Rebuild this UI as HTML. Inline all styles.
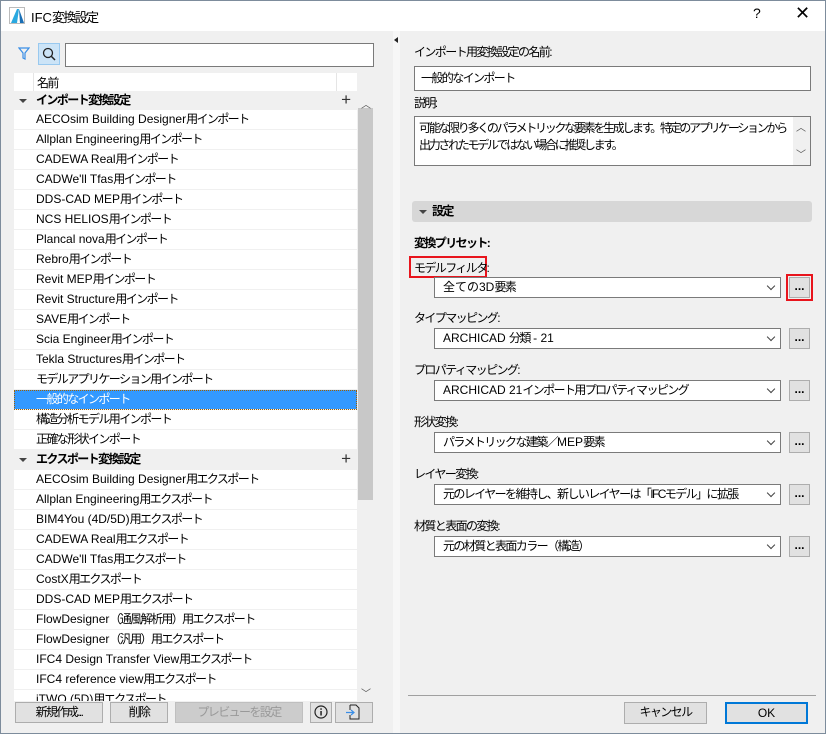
<!DOCTYPE html><html><head><meta charset="utf-8"><style>
*{box-sizing:border-box;margin:0;padding:0}
body{width:826px;height:734px;overflow:hidden;font-family:"Liberation Sans","Noto Sans CJK JP",sans-serif;font-size:12px;color:#000;background:#f0f0f0;position:relative;white-space:nowrap}
i{font-style:normal;letter-spacing:-1.6px}
.j{letter-spacing:-1.6px}
.a{position:absolute}
.win{left:0;top:0;width:826px;height:734px;border:1px solid #7d8c9c}
.title{left:1px;top:1px;width:824px;height:30px;background:#fff}
.row{position:absolute;left:14px;width:343px;height:20px;line-height:19px;padding-left:22px;background:#fff;border-bottom:1px solid #f0f0f0;white-space:nowrap}
.grp{background:#f0f0f0;font-weight:bold;padding-left:22px}
.grp:before{content:"";position:absolute;left:5px;top:8px;border-left:4px solid transparent;border-right:4px solid transparent;border-top:4px solid #444}
.plus{position:absolute;right:6px;top:-1px;font-size:17px;font-weight:normal;color:#333;letter-spacing:0}
.sel{background:#3399ff;color:#fff;outline:1px dotted #a06000;outline-offset:-1px}
.btn{position:absolute;background:#e1e1e1;border:1px solid #adadad;text-align:center;line-height:19px}
.inp{position:absolute;background:#fff;border:1px solid #7a7a7a;padding-left:6px;line-height:20px}
.sl{position:absolute;left:434px;width:347px;height:21px;background:#fff;border:1px solid #7a7a7a;padding-left:8px;line-height:19px;overflow:hidden}
.sl:after{content:"";position:absolute;right:6px;top:5px;width:5px;height:5px;border-right:1px solid #444;border-bottom:1px solid #444;transform:rotate(45deg)}
.db{position:absolute;left:789px;width:21px;height:21px;background:#e1e1e1;border:1px solid #adadad;text-align:center;line-height:17px;font-weight:bold}
.lb{position:absolute;left:414px;letter-spacing:-1.6px}
</style></head><body>
<div class="a win"></div>
<div class="a title"></div>
<svg class="a" style="left:9px;top:7px" width="16" height="17"><rect width="16" height="17" fill="#fff"/><path d="M2 16 L8 2 L10 2 L8 16Z" fill="#29a8e0"/><path d="M10 2 L15 16 L11 16Z" fill="#1a6fb5"/><rect x="0.5" y="0.5" width="15" height="16" fill="none" stroke="#bbb"/></svg>
<div class="a" style="left:31px;top:7px;font-size:13px">IFC<i>変換設定</i></div>
<div class="a" style="left:753px;top:5px;font-size:14px">?</div>
<div class="a" style="left:795px;top:3px;font-size:18px">✕</div>
<div class="a" style="left:393px;top:31px;width:7px;height:702px;background:#f7f7f7"></div>
<div class="a" style="left:394px;top:37px;border-top:3px solid transparent;border-bottom:3px solid transparent;border-right:4px solid #222"></div>
<svg class="a" style="left:18px;top:47px" width="12" height="14"><path d="M1 1 H11 L7 6 V12 L5 11 V6Z" fill="none" stroke="#3a8ee6" stroke-width="1.2"/></svg>
<div class="a" style="left:38px;top:43px;width:22px;height:22px;background:#cce4f7;border:1px solid #99c9ef"></div>
<svg class="a" style="left:42px;top:47px" width="14" height="14"><circle cx="6" cy="6" r="4.5" fill="none" stroke="#222" stroke-width="1.3"/><path d="M9.5 9.5 L13 13" stroke="#222" stroke-width="1.5"/></svg>
<div class="inp" style="left:65px;top:43px;width:309px;height:24px"></div>
<div class="a" style="left:14px;top:73px;width:343px;height:18px;background:#fff"></div>
<div class="a" style="left:33px;top:73px;width:1px;height:18px;background:#e5e5e5"></div>
<div class="a" style="left:336px;top:73px;width:1px;height:18px;background:#e5e5e5"></div>
<div class="a j" style="left:37px;top:74px">名前</div>
<div class="a" style="left:357px;top:91px;width:16px;height:610px;background:#f0f0f0"></div>
<div class="a" style="left:358px;top:108px;width:15px;height:392px;background:#c8c8c8"></div>
<div class="a" style="left:361px;top:96px;font-size:10px;color:#555">︿</div>
<div class="a" style="left:361px;top:685px;font-size:10px;color:#555">﹀</div>
<div class="a" style="left:14px;top:91px;width:343px;height:610px;overflow:hidden">
<div style="position:relative;top:-91px;left:-14px">
<div class="row grp j" style="top:91px">インポート変換設定<span class="plus">+</span></div>
<div class="row" style="top:110px">AECOsim Building Designer<i>用インポート</i></div>
<div class="row" style="top:130px">Allplan Engineering<i>用インポート</i></div>
<div class="row" style="top:150px">CADEWA Real<i>用インポート</i></div>
<div class="row" style="top:170px">CADWe'll Tfas<i>用インポート</i></div>
<div class="row" style="top:190px">DDS-CAD MEP<i>用インポート</i></div>
<div class="row" style="top:210px">NCS HELIOS<i>用インポート</i></div>
<div class="row" style="top:230px">Plancal nova<i>用インポート</i></div>
<div class="row" style="top:250px">Rebro<i>用インポート</i></div>
<div class="row" style="top:270px">Revit MEP<i>用インポート</i></div>
<div class="row" style="top:290px">Revit Structure<i>用インポート</i></div>
<div class="row" style="top:310px">SAVE<i>用インポート</i></div>
<div class="row" style="top:330px">Scia Engineer<i>用インポート</i></div>
<div class="row" style="top:350px">Tekla Structures<i>用インポート</i></div>
<div class="row j" style="top:370px">モデルアプリケーション用インポート</div>
<div class="row sel j" style="top:390px">一般的なインポート</div>
<div class="row j" style="top:410px">構造分析モデル用インポート</div>
<div class="row j" style="top:430px">正確な形状インポート</div>
<div class="row grp j" style="top:450px">エクスポート変換設定<span class="plus">+</span></div>
<div class="row" style="top:470px">AECOsim Building Designer<i>用エクスポート</i></div>
<div class="row" style="top:490px">Allplan Engineering<i>用エクスポート</i></div>
<div class="row" style="top:510px">BIM4You (4D/5D)<i>用エクスポート</i></div>
<div class="row" style="top:530px">CADEWA Real<i>用エクスポート</i></div>
<div class="row" style="top:550px">CADWe'll Tfas<i>用エクスポート</i></div>
<div class="row" style="top:570px">CostX<i>用エクスポート</i></div>
<div class="row" style="top:590px">DDS-CAD MEP<i>用エクスポート</i></div>
<div class="row" style="top:610px">FlowDesigner<i>（通風解析用）用エクスポート</i></div>
<div class="row" style="top:630px">FlowDesigner<i>（汎用）用エクスポート</i></div>
<div class="row" style="top:650px">IFC4 Design Transfer View<i>用エクスポート</i></div>
<div class="row" style="top:670px">IFC4 reference view<i>用エクスポート</i></div>
<div class="row" style="top:690px">iTWO (5D)<i>用エクスポート</i></div>
</div></div>
<div class="btn j" style="left:15px;top:702px;width:88px;height:21px">新規作成...</div>
<div class="btn j" style="left:110px;top:702px;width:58px;height:21px">削除</div>
<div class="btn j" style="left:175px;top:702px;width:128px;height:21px;background:#ccc;border-color:#bfbfbf;color:#999">プレビューを設定</div>
<div class="btn" style="left:310px;top:702px;width:22px;height:21px"></div>
<svg class="a" style="left:314px;top:705px" width="14" height="14"><circle cx="7" cy="7" r="6" fill="none" stroke="#222" stroke-width="1.2"/><rect x="6.3" y="6" width="1.5" height="4.5" fill="#222"/><rect x="6.3" y="3.3" width="1.5" height="1.5" fill="#222"/></svg>
<div class="btn" style="left:335px;top:702px;width:38px;height:21px"></div>
<svg class="a" style="left:345px;top:704px" width="16" height="17"><path d="M5 1 H11 L14 4 V15 H5 V11 M5 6 V1" fill="none" stroke="#222"/><path d="M1 8.5 H9 M6 6 L9 8.5 L6 11" fill="none" stroke="#3a8ee6" stroke-width="1.2"/></svg>
<div class="lb" style="top:43px">インポート用変換設定の名前:</div>
<div class="inp j" style="left:414px;top:66px;width:397px;height:25px;line-height:22px">一般的なインポート</div>
<div class="lb" style="top:94px">説明:</div>
<div class="inp" style="left:414px;top:116px;width:397px;height:50px;line-height:17px;padding-top:3px;padding-left:4px;letter-spacing:-2.3px;overflow:hidden">可能な限り多くのパラメトリックな要素を生成します。特定のアプリケーションから<br>出力されたモデルではない場合に推奨します。</div>
<div class="a" style="left:793px;top:117px;width:17px;height:48px;background:#f0f0f0"></div>
<div class="a" style="left:796px;top:119px;font-size:10px;color:#555">︿</div>
<div class="a" style="left:796px;top:146px;font-size:10px;color:#555">﹀</div>
<div class="a j" style="left:412px;top:201px;width:400px;height:21px;background:#d7d7d7;border-radius:3px;font-weight:bold;padding-left:20px;line-height:21px">設定</div>
<div class="a" style="left:419px;top:210px;border-left:4px solid transparent;border-right:4px solid transparent;border-top:4px solid #444"></div>
<div class="lb" style="top:234px;font-weight:bold">変換プリセット:</div>
<div class="a" style="left:409px;top:256px;width:78px;height:22px;border:2px solid #e8141c"></div>
<div class="lb" style="top:259px">モデルフィルタ:</div>
<div class="sl" style="top:277px">全ての3D<i>要素</i></div>
<div class="a" style="left:786px;top:274px;width:27px;height:27px;border:2px solid #e8141c"></div>
<div class="db" style="top:277px">...</div>
<div class="lb" style="top:309px">タイプマッピング:</div>
<div class="sl" style="top:328px">ARCHICAD <i>分類</i> - 21</div><div class="db" style="top:328px">...</div>
<div class="lb" style="top:361px">プロパティマッピング:</div>
<div class="sl" style="top:380px">ARCHICAD 21<i>インポート用プロパティマッピング</i></div><div class="db" style="top:380px">...</div>
<div class="lb" style="top:413px">形状変換:</div>
<div class="sl" style="top:432px"><i>パラメトリックな建築／</i>MEP<i>要素</i></div><div class="db" style="top:432px">...</div>
<div class="lb" style="top:465px">レイヤー変換:</div>
<div class="sl j" style="top:484px">元のレイヤーを維持し、新しいレイヤーは「IFCモデル」に拡張</div><div class="db" style="top:484px">...</div>
<div class="lb" style="top:517px">材質と表面の変換:</div>
<div class="sl j" style="top:536px">元の材質と表面カラー（構造）</div><div class="db" style="top:536px">...</div>
<div class="a" style="left:408px;top:695px;width:408px;height:1px;background:#a0a0a0"></div>
<div class="btn j" style="left:624px;top:702px;width:83px;height:22px">キャンセル</div>
<div class="btn" style="left:725px;top:702px;width:83px;height:22px;border:2px solid #0078d7;line-height:18px">OK</div>
</body></html>
